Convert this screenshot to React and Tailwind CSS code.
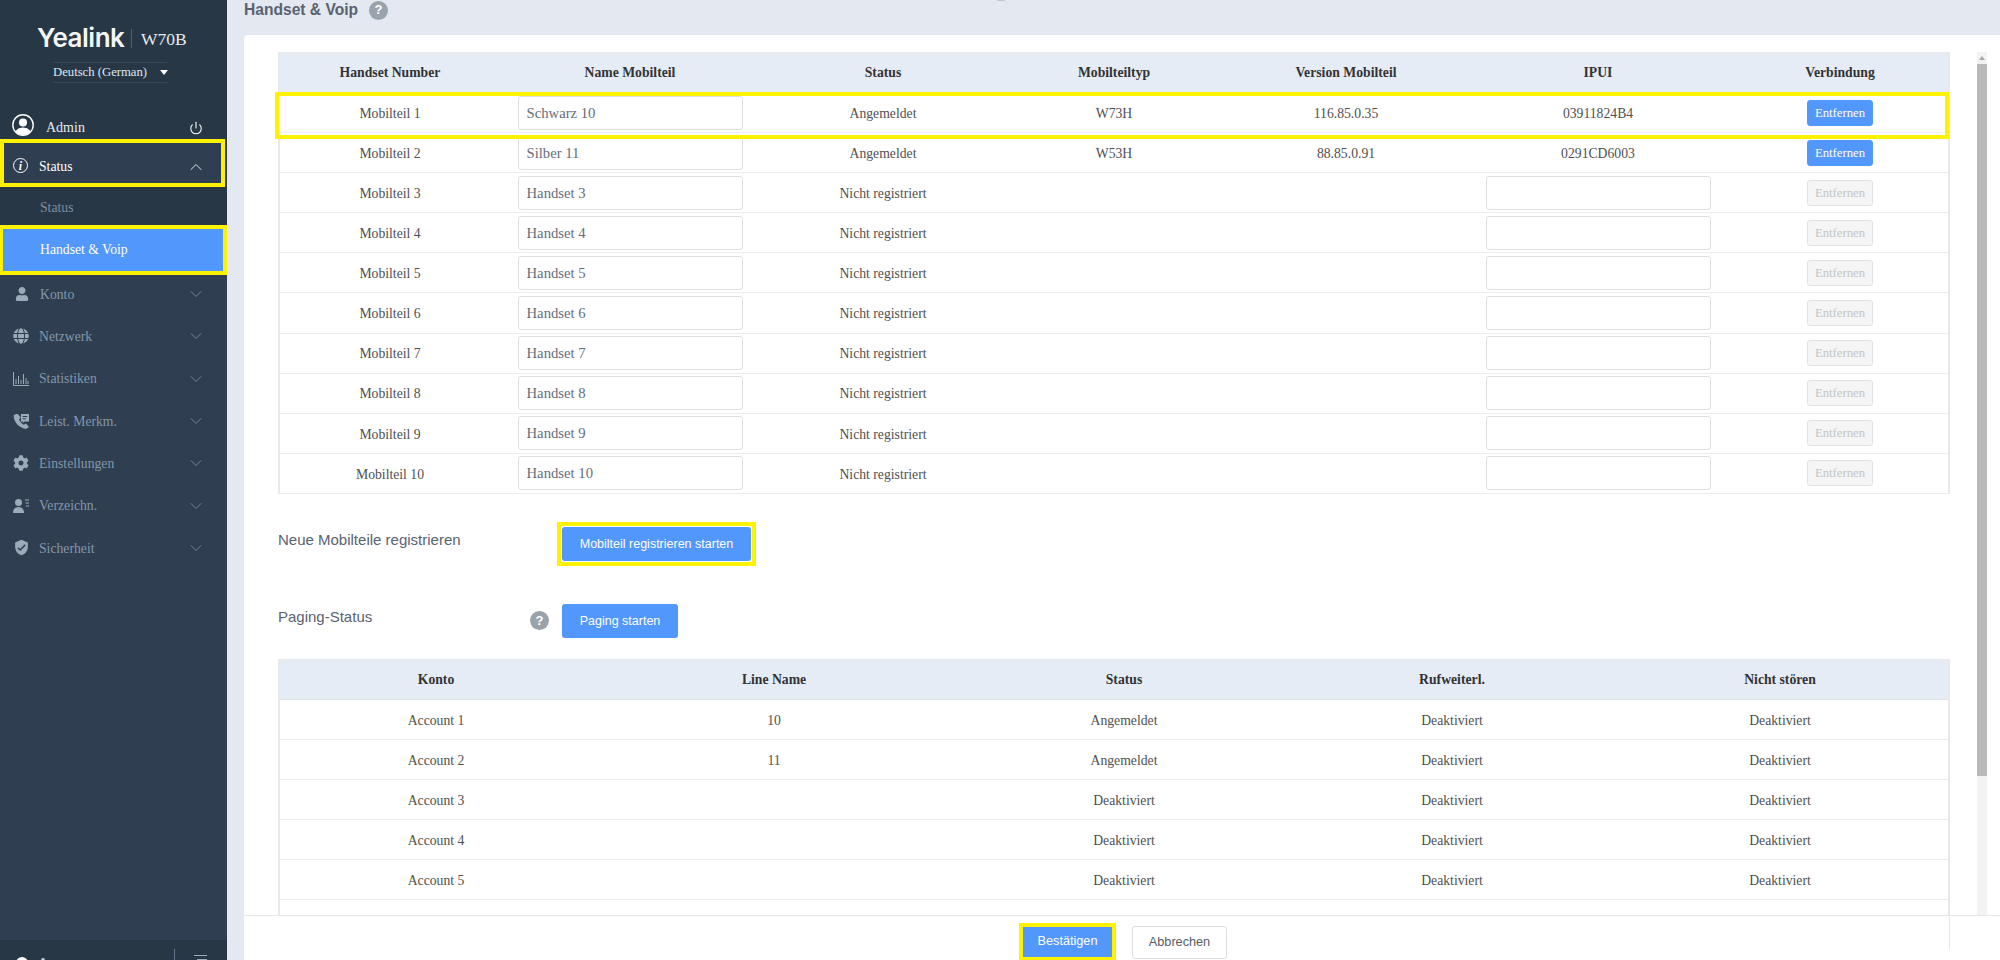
import { ChevronDown, ChevronUp, Power } from 'lucide-react';
import { FaCog, FaGlobe, FaUser } from 'react-icons/fa';
import { MdVerifiedUser } from 'react-icons/md';

const serif = "font-['Liberation_Serif','Times_New_Roman',serif]";
const sans = "font-['Liberation_Sans',Arial,sans-serif]";

const ChartIcon = (props) => (
  <svg viewBox="0 0 16 14" fill="none" stroke="currentColor" strokeWidth="1" {...props}>
    <path d="M.5 0v13.5H16M3 12V7M5.5 12V4M8 12V8M10.5 12V2M13 12V6M15 12V9" />
  </svg>
);

const PhoneListIcon = (props) => (
  <svg viewBox="0 0 16 15" fill="currentColor" {...props}>
    <path d="M3.4 0 .8 1C.2 6.500 4.500 13.500 13 15l2.400-1.400a.8.8 0 0 0 .2-1.100L13.400 10a.8.8 0 0 0-1-.2l-1.600 1C8.600 9.700 6.800 7.300 6 5.300l1.300-1.100a.8.800 0 0 0 .2-1L5 .3A1.200 1.200 0 0 0 3.400 0Z" />
    <path fillRule="evenodd" d="M8 0h8v7.500h-4.500L9.800 9V7.500H8ZM9.700 2v1h4.600V2Zm0 2.300v1h3v-1Z" />
  </svg>
);

const ContactIcon = (props) => (
  <svg viewBox="0 0 16 14" fill="currentColor" {...props}>
    <circle cx="5.500" cy="3.500" r="3.500" />
    <path d="M0 14c0-4 2.200-6 5.500-6s5.500 2 5.500 6Z" />
    <path d="M12 .5h4v1h-4ZM12.500 3.500H16v1h-3.500ZM13 6.500h3v1h-3Z" />
  </svg>
);

const AvatarIcon = () => (
  <svg viewBox="0 0 22 22" className="w-[22px] h-[22px] text-white">
    <defs>
      <clipPath id="av"><circle cx="11" cy="11" r="10" /></clipPath>
    </defs>
    <circle cx="11" cy="11" r="10.200" fill="none" stroke="currentColor" strokeWidth="1.400" />
    <g clipPath="url(#av)" fill="currentColor">
      <circle cx="11" cy="8.500" r="4" />
      <path d="M2 23c0-6 4-9.500 9-9.500s9 3.500 9 9.500Z" />
    </g>
  </svg>
);

const HelpDot = ({ className }) => (
  <span className={`${sans} inline-flex items-center justify-center w-[19px] h-[19px] rounded-full bg-[#9aa3ab] text-white text-[13px] font-bold shrink-0 ${className || ''}`}>?</span>
);

const navItems = [
  { label: 'Konto', Icon: FaUser, size: 'w-[14px] h-[14px] ml-[15px] mr-[11px]' },
  { label: 'Netzwerk', Icon: FaGlobe, size: 'w-[16px] h-[16px] ml-[13px] mr-[10px]' },
  { label: 'Statistiken', Icon: ChartIcon, size: 'w-[16px] h-[14px] ml-[13px] mr-[10px]' },
  { label: 'Leist. Merkm.', Icon: PhoneListIcon, size: 'w-[16px] h-[15px] ml-[13px] mr-[10px]' },
  { label: 'Einstellungen', Icon: FaCog, size: 'w-[16px] h-[16px] ml-[13px] mr-[10px]' },
  { label: 'Verzeichn.', Icon: ContactIcon, size: 'w-[16px] h-[14px] ml-[13px] mr-[10px]' },
  { label: 'Sicherheit', Icon: MdVerifiedUser, size: 'w-[17px] h-[17px] ml-[13px] mr-[9px]' },
];

const Sidebar = () => (
  <aside className={`${serif} w-[227px] shrink-0 h-full flex flex-col bg-[#2f3e50] overflow-hidden`}>
    <div className="bg-[#283746] h-[139px] shrink-0">
      <div className="flex items-center h-[32px] mt-[22px] pl-[37px]">
        <span className="font-['Inter',sans-serif] font-semibold text-[26px] tracking-[-0.5px] text-[#f4f6f8] w-[86px] leading-none">Yealink</span>
        <span className="w-px h-[19px] bg-[#4d5d6e] ml-[8px] mr-[9px]" />
        <span className="text-[17.500px] text-[#e6ebf0] leading-none mt-[3px]">W70B</span>
      </div>
      <div className="flex items-center ml-[53px] w-[114px] h-[21px] mt-[8px] border-y border-[#33465a] text-[12.700px] text-[#dfe7f0] whitespace-nowrap">
        Deutsch (German)
        <span className="ml-[13px] shrink-0 w-0 h-0 border-x-[4px] border-x-transparent border-t-[5px] border-t-white" />
      </div>
      <div className="flex items-center h-[29px] mt-[27px] pl-[12px] pr-[24px] text-white">
        <AvatarIcon />
        <span className="ml-[12px] mt-[6px] text-[14px] flex-1 text-[#e6ebf0]">Admin</span>
        <Power className="w-[14px] h-[14px] mt-[6px]" strokeWidth={1.800} />
      </div>
    </div>

    <div className="w-[225px] h-[48px] shrink-0 flex items-center border-4 border-[#fff200] bg-[#2f3e50] text-white text-[13.700px]">
      <span className="w-[15px] h-[15px] ml-[9px] mr-[11px] mt-[5px] shrink-0 rounded-full border-[1.500px] border-white flex items-center justify-center text-[12px] italic font-bold leading-none">i</span>
      <span className="flex-1 mt-[8px]">Status</span>
      <ChevronUp className="w-[20px] h-[20px] mr-[15px] mt-[8px] text-[#dfe5ea]" strokeWidth={1.200} />
    </div>

    <div className="bg-[#283746] h-[86px] shrink-0 text-[13.700px]">
      <div className="h-[42px] flex items-center pl-[40px] text-[#7f8fa0]">Status</div>
      <div className="relative z-10 ml-[3px] w-[220px] h-[42px] flex items-center pl-[37px] bg-[#5297fb] text-white outline-4 outline-[#fff200]">Handset &amp; Voip</div>
    </div>

    <nav className="flex-1 text-[13.700px] text-[#8398ab]">
      {navItems.map(({ label, Icon, size }) => (
        <div key={label} className="h-[42.300px] flex items-center">
          <Icon className={`${size} shrink-0 text-[#9cabb9]`} />
          <span className="flex-1 mt-[2px]">{label}</span>
          <ChevronDown className="w-[20px] h-[20px] mr-[21px] text-[#72869a]" strokeWidth={1.200} />
        </div>
      ))}
    </nav>

    <div className="h-[20px] shrink-0 bg-[#283746] relative overflow-hidden">
      <span className="absolute left-[16px] top-[17px] w-[12px] h-[12px] rounded-full bg-white" />
      <FaCog className="absolute left-[37px] top-[18px] w-[12px] h-[12px] text-[#cfd6dd]" />
      <span className="absolute left-[174px] top-[9px] w-px h-[11px] bg-[#64748a]" />
      <span className="absolute left-[194px] top-[15px] w-[13px] h-px bg-[#9cabb9]" />
      <span className="absolute left-[197px] top-[19px] w-[10px] h-px bg-[#9cabb9]" />
    </div>
  </aside>
);

const handsets = [
  { id: 'Mobilteil 1', name: 'Schwarz 10', status: 'Angemeldet', type: 'W73H', version: '116.85.0.35', ipui: '03911824B4' },
  { id: 'Mobilteil 2', name: 'Silber 11', status: 'Angemeldet', type: 'W53H', version: '88.85.0.91', ipui: '0291CD6003' },
  { id: 'Mobilteil 3', name: 'Handset 3' },
  { id: 'Mobilteil 4', name: 'Handset 4' },
  { id: 'Mobilteil 5', name: 'Handset 5' },
  { id: 'Mobilteil 6', name: 'Handset 6' },
  { id: 'Mobilteil 7', name: 'Handset 7' },
  { id: 'Mobilteil 8', name: 'Handset 8' },
  { id: 'Mobilteil 9', name: 'Handset 9' },
  { id: 'Mobilteil 10', name: 'Handset 10' },
];

const accounts = [
  { id: 'Account 1', line: '10', status: 'Angemeldet', fwd: 'Deaktiviert', dnd: 'Deaktiviert' },
  { id: 'Account 2', line: '11', status: 'Angemeldet', fwd: 'Deaktiviert', dnd: 'Deaktiviert' },
  { id: 'Account 3', line: '', status: 'Deaktiviert', fwd: 'Deaktiviert', dnd: 'Deaktiviert' },
  { id: 'Account 4', line: '', status: 'Deaktiviert', fwd: 'Deaktiviert', dnd: 'Deaktiviert' },
  { id: 'Account 5', line: '', status: 'Deaktiviert', fwd: 'Deaktiviert', dnd: 'Deaktiviert' },
  // next row only shows its top edge above the footer
  { id: '', line: '', status: '', fwd: '', dnd: '' },
];

const handsetCols = 'grid grid-cols-[220px_260px_246px_216px_248px_256px_1fr] items-center text-center';
const accountCols = 'grid grid-cols-[312px_364px_336px_320px_1fr] items-center text-center';
const headCls = 'h-[41px] bg-[#e6ecf6] border-t-2 border-t-[#e8eaef] border-b border-b-[#dde1e8] font-bold text-[#333]';
const rowCls = 'h-[40.100px] border-b border-b-[#ededed]';

const Field = ({ value }) => (
  <input
    readOnly
    value={value}
    className={`${serif} block mx-auto w-[225px] h-[34px] px-[8px] pt-[1px] rounded-[3px] border border-[#dfdfdf] bg-white text-[14.700px] text-[#666d78] outline-none`}
  />
);

const RemoveBtn = ({ disabled }) => (
  <button
    disabled={disabled}
    className={`mx-auto block w-[66px] h-[26px] pt-[1px] rounded-[3px] border text-[12.700px] ${disabled ? 'bg-[#f5f5f5] border-[#e2e2e2] text-[#c4c4c4]' : 'bg-[#5297fb] border-[#5297fb] text-white'}`}
  >
    Entfernen
  </button>
);

const HandsetTable = () => (
  <div className={`${serif} relative border-x-2 border-x-[#e9e9e9] text-[13.700px] text-[#4f4f4f]`}>
    <div className={`${handsetCols} ${headCls}`}>
      <div>Handset Number</div>
      <div>Name Mobilteil</div>
      <div>Status</div>
      <div>Mobilteiltyp</div>
      <div>Version Mobilteil</div>
      <div>IPUI</div>
      <div className="pl-[6px]">Verbindung</div>
    </div>
    {handsets.map((h) => (
      <div key={h.id} className={`${handsetCols} ${rowCls}`}>
        <div className="pt-[3px]">{h.id}</div>
        <div><Field value={h.name} /></div>
        <div className="pt-[3px]">{h.status || 'Nicht registriert'}</div>
        <div className="pt-[3px]">{h.type}</div>
        <div className="pt-[3px]">{h.version}</div>
        {h.ipui ? <div className="pt-[3px]">{h.ipui}</div> : <div><Field value="" /></div>}
        <div className="pl-[6px]"><RemoveBtn disabled={!h.ipui} /></div>
      </div>
    ))}
    {/* annotation box from the original screenshot */}
    <div className="absolute left-[-5px] top-[40px] w-[1674px] h-[47px] border-4 border-[#fff200] pointer-events-none" />
  </div>
);

const AccountTable = () => (
  <div className={`${serif} border-x-2 border-x-[#e9e9e9] text-[13.700px] text-[#4f4f4f]`}>
    <div className={`${accountCols} ${headCls}`}>
      <div>Konto</div>
      <div>Line Name</div>
      <div>Status</div>
      <div>Rufweiterl.</div>
      <div>Nicht stören</div>
    </div>
    {accounts.map((a, i) => (
      <div key={i} className={`${accountCols} ${rowCls}`}>
        <div className="pt-[3px]">{a.id}</div>
        <div className="pt-[3px]">{a.line}</div>
        <div className="pt-[3px]">{a.status}</div>
        <div className="pt-[3px]">{a.fwd}</div>
        <div className="pt-[3px]">{a.dnd}</div>
      </div>
    ))}
  </div>
);

const Scrollbar = () => (
  <div className="w-[10px] shrink-0 mt-[17px] mr-[13px] flex flex-col bg-[#f3f3f3]">
    <div className="h-[12px] flex items-center justify-center">
      <span className="w-0 h-0 border-x-[3px] border-x-transparent border-b-[4px] border-b-[#a8a8a8]" />
    </div>
    <div className="h-[712px] bg-[#b9b9b9]" />
  </div>
);

export default function App() {
  return (
    <div className="w-full h-screen flex bg-[#e4e8f1] overflow-hidden">
      <Sidebar />
      <main className="flex-1 min-w-0 h-full flex flex-col">
        <div className="relative h-[35px] shrink-0">
          <div className={`${sans} flex items-center h-[20px] pl-[17px] gap-[11px] font-bold text-[15.600px] text-[#5a6270]`}>
            Handset &amp; Voip
            <HelpDot />
          </div>
          <span className="absolute left-[770px] top-0 w-[8px] h-px bg-[#c3c7cf]" />
        </div>

        <section className="flex-1 min-h-0 ml-[17px] flex flex-col bg-white rounded-tl-[4px]">
          <div className="flex-1 min-h-0 flex">
            <div className="flex-1 min-w-0 overflow-hidden pt-[17px] pl-[34px] pr-[27px]">
              <HandsetTable />

              <div className={`${sans} flex items-start mt-[28px] h-[44px] text-[15px] text-[#5b6270]`}>
                <span className="w-[279px] mt-[7px]">Neue Mobilteile registrieren</span>
                <div className="w-[199px] h-[44px] border-4 border-[#fff200] p-[1px]">
                  <button className="w-full h-full rounded-[3px] bg-[#5297fb] text-white text-[12.500px]">Mobilteil registrieren starten</button>
                </div>
              </div>

              <div className={`${sans} flex items-start mt-[38px] h-[34px] text-[15px] text-[#5b6270]`}>
                <span className="w-[252px] mt-[2px]">Paging-Status</span>
                <HelpDot className="mt-[7px] mr-[13px]" />
                <button className="w-[116px] h-[34px] rounded-[3px] bg-[#5297fb] text-white text-[12.500px]">Paging starten</button>
              </div>

              <div className="mt-[21px]">
                <AccountTable />
              </div>
            </div>
            <Scrollbar />
          </div>

          <footer className={`${sans} relative h-[45px] shrink-0 border-t border-t-[#e6e6e6] bg-white flex justify-center gap-[16px] pt-[7px] pl-[2px]`}>
            <button className="w-[97px] h-[38px] border-4 border-[#fff200] bg-[#5297fb] text-white text-[12.700px]">Bestätigen</button>
            <button className="w-[95px] h-[33px] mt-[3px] rounded-[3px] border border-[#dedede] bg-white text-[#555c66] text-[12.700px]">Abbrechen</button>
            <span className="absolute left-[1705px] top-0 w-px h-[33px] bg-[#e9e9e9]" />
          </footer>
        </section>
      </main>
    </div>
  );
}
